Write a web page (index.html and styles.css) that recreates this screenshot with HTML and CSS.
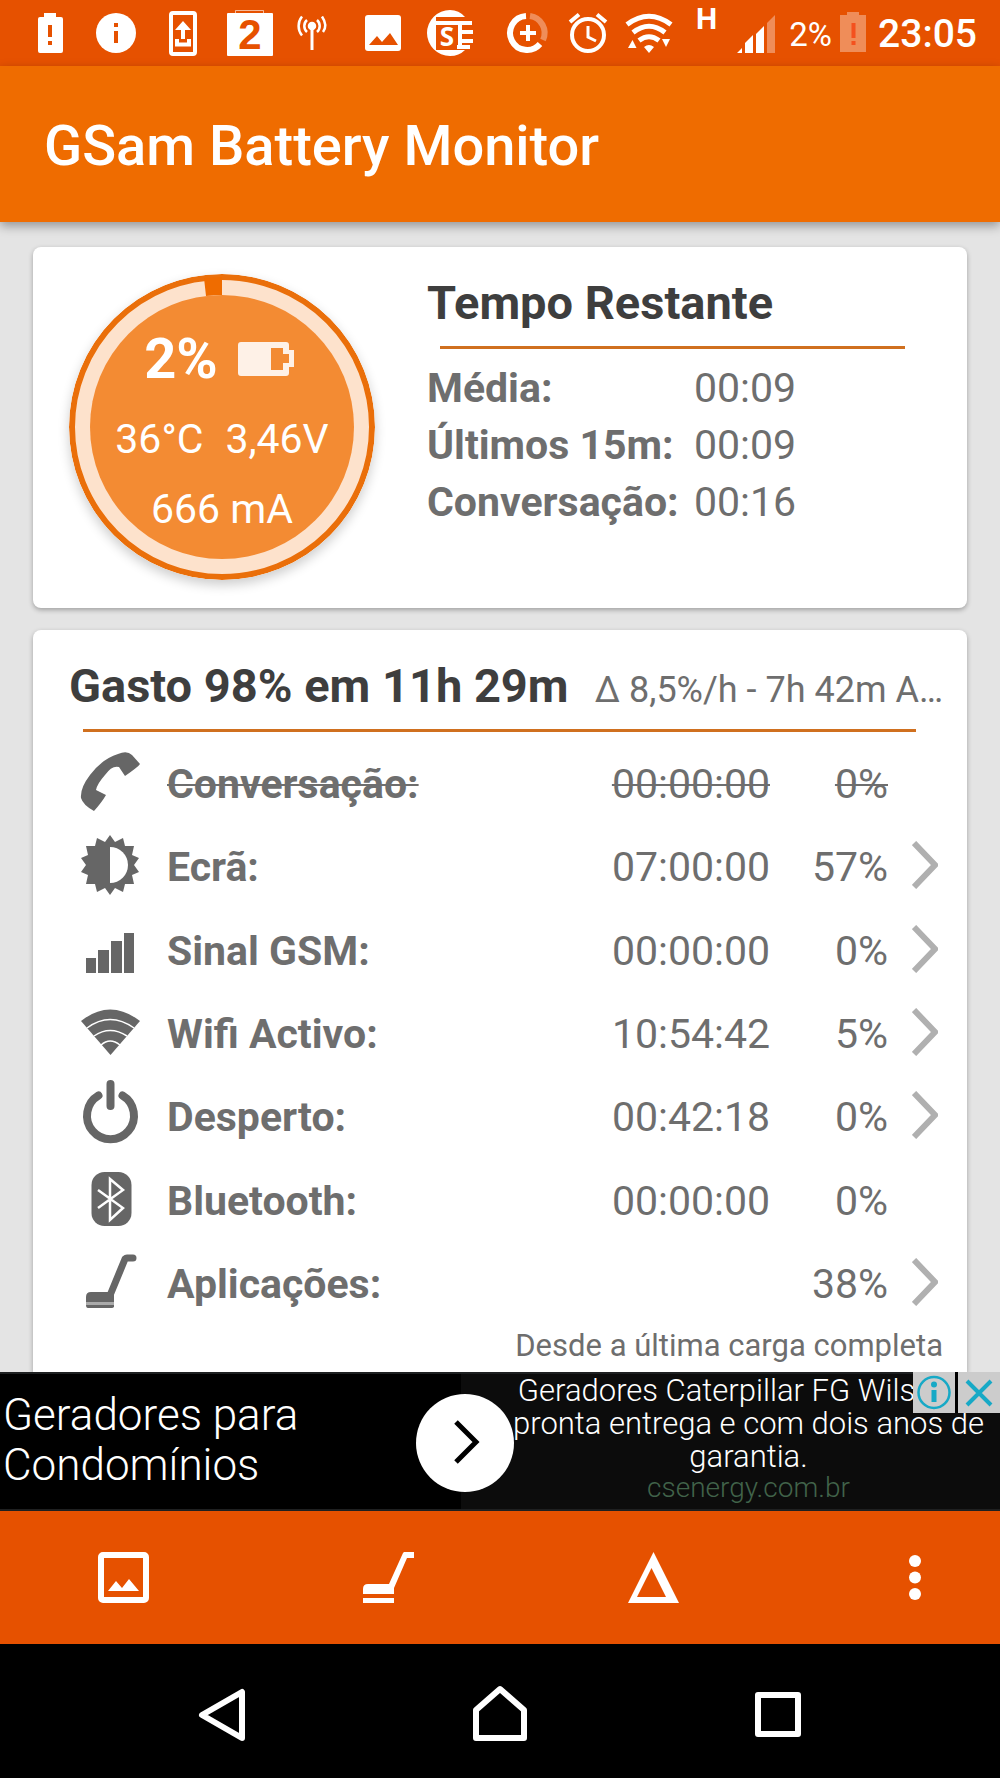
FILE: index.html
```html
<!DOCTYPE html>
<html lang="pt">
<head>
<meta charset="utf-8">
<meta name="viewport" content="width=device-width, initial-scale=1">
<title>GSam Battery Monitor</title>
<link rel="stylesheet" href="styles.css">
</head>
<body>
<div class="statusbar">
  <div class="notifications">
    <svg viewBox="0 0 67 66"><path fill="#fff" d="M29 13h12v4h5q2 0 2 2v32q0 2-2 2H25q-2 0-2-2V19q0-2 2-2h4z"/><path stroke="#e65100" stroke-width="4" d="M35 25v12M35 41v4"/></svg>
    <svg viewBox="0 0 67 66"><circle cx="34" cy="33" r="20" fill="#fff"/><path stroke="#e65100" stroke-width="4" d="M34 23v4M34 31v12"/></svg>
    <svg viewBox="0 0 67 66"><rect x="22" y="13" width="24" height="41" rx="2" fill="none" stroke="#fff" stroke-width="4"/><path fill="#fff" d="M34 21l8 9h-6v9h-4v-9h-6z"/><path fill="none" stroke="#fff" stroke-width="4" d="M28 39v5.500h12V39"/></svg>
    <svg viewBox="0 0 67 66"><path fill="none" stroke="#fff" stroke-opacity=".6" d="M19.500 14v-3.500h28V14"/><rect x="11" y="13" width="46" height="43" rx="1" fill="#fff"/><text class="calendar-day" x="34" y="49" text-anchor="middle">2</text></svg>
    <svg viewBox="0 0 67 66"><g fill="none" stroke="#fff" stroke-width="2.500"><circle cx="29" cy="26" r="3" fill="#fff"/><path stroke-width="3" d="M29 27v23"/><path d="M24 20a8 8 0 0 0 0 12M34 20a8 8 0 0 1 0 12M19 16.500a15 15 0 0 0 0 19M39 16.500q6 9 1 15.500"/></g></svg>
    <svg viewBox="0 0 67 66"><rect x="15" y="15" width="36" height="36" rx="3" fill="#fff"/><path fill="#e65100" d="M19 45l8-9 5 6 8-9 8 12z"/></svg>
    <svg viewBox="0 0 67 66"><path fill="#fff" d="M33 10a23 23 0 1 0 0 46q9 0 15-6H19V17h29q-6-7-15-7z"/><path stroke="#fff" stroke-width="4" d="M19 23h36M44 32h12M44 41h12M40 47h13"/><path fill="#fff" d="M41 22h4v27h-4z"/><text class="badge-letter" x="30" y="46" text-anchor="middle">S</text></svg>
  </div>
  <div class="system">
    <svg viewBox="0 0 60 66"><g fill="none" stroke-width="6"><path stroke="#fff" stroke-opacity=".35" d="M32 16a17 17 0 0 1 13 24"/><path stroke="#fff" d="M28 16a17 17 0 1 0 14 28"/><path stroke="#fff" stroke-width="4" d="M22 33h16M30 25v16"/></g></svg>
    <svg viewBox="0 0 60 66"><g fill="none" stroke="#fff" stroke-width="4"><circle cx="30" cy="35" r="16"/><path stroke-width="3" d="M30 26v11l8 4"/><path d="M12 22l9-7.500M39 14.500l9 7.500"/></g></svg>
    <svg viewBox="0 0 60 66"><g fill="none" stroke="#fff" stroke-width="5"><path d="M9 24.500Q31 8 53 24.500M15 32.500Q31 20 47 32.500M21 40.500Q31 33 41 40.500"/></g><path fill="#fff" d="M26 47q5-4 10 0l-5 6zM10 48l4.500-8 4 8zM44 39h8l-4 8z"/></svg>
    <svg class="network" viewBox="0 0 106 66"><text class="network-type" x="18" y="29">H</text><path fill="#fff" d="M59 53l5-5v5zM67 43l8-8v18h-8zM78 34l8-8v27h-8z"/><path fill="#fff" fill-opacity=".35" d="M89 23l8-8v38h-8z"/></svg>
    <span class="percent">2%</span>
    <svg class="charge" viewBox="0 0 26 66"><path fill="#fff" fill-opacity=".35" d="M7 12h12v3h7v37H0V15h7z"/><path stroke="#f4511e" stroke-width="4" d="M13.500 23v15M13.500 41v4"/></svg>
    <time class="clock">23:05</time>
  </div>
</div>

<header class="appbar"><h1>GSam Battery Monitor</h1></header>

<main class="content">
  <section class="card summary">
    <div class="gauge">
      <svg class="gauge-ring" viewBox="0 0 306 306"><circle cx="153" cy="153" r="150" fill="#fde2cc" stroke="#ea6f0a" stroke-width="6"/><circle cx="153" cy="153" r="132" fill="#f38b33"/><path fill="#ef6c00" d="M153 3v18q-8 0-16 1l-2-18z"/></svg>
      <div class="gauge-text">
        <div class="level"><strong>2%</strong>
          <svg viewBox="0 0 56 34"><path fill="#fef1e7" fill-rule="evenodd" d="M3 0h45q3 0 3 3v5h5v17h-5v6q0 3-3 3H3q-3 0-3-3V3q0-3 3-3zM33 6v22h12v-7h6v-9h-6V6z"/></svg>
        </div>
        <div class="reading"><span>36°C</span><span>3,46V</span></div>
        <div class="reading">666 mA</div>
      </div>
    </div>
    <div class="remaining">
      <h2>Tempo Restante</h2>
      <hr>
      <dl>
        <dt>Média:</dt><dd>00:09</dd>
        <dt>Últimos 15m:</dt><dd>00:09</dd>
        <dt>Conversação:</dt><dd>00:16</dd>
      </dl>
    </div>
  </section>

  <section class="card usage">
    <div class="usage-head"><h2>Gasto 98% em 11h 29m</h2><p>Δ 8,5%/h - 7h 42m A…</p></div>
    <hr>
    <table>
      <tr class="off">
        <td class="icon"><svg viewBox="0 0 64 64"><path d="M40 4Q49 0 54 5L62 14Q60 17 47 26L41 17Q34 15 27 25Q19 34 18 40L28 45Q24 52 16 61Q5 55 3 48Q2 38 12 25Q24 9 40 4Z"/></svg></td>
        <th scope="row">Conversação:</th><td class="time"><span>00:00:00</span></td><td class="share"><span>0%</span></td><td class="go"></td>
      </tr>
      <tr>
        <td class="icon"><svg viewBox="0 0 64 64"><g transform="translate(32 32)"><polygon points="0,-30 5,-23 13,-27 15,-19 24,-19 22,-10 29,-7 24,0 29,7 22,10 24,19 15,19 13,27 5,23 0,30 -5,23 -13,27 -15,19 -24,19 -22,10 -29,7 -24,0 -29,-7 -22,-10 -24,-19 -15,-19 -13,-27 -5,-23"/><path fill="#fff" d="M0-18A18 18 0 0 1 0 18Z"/></g></svg></td>
        <th scope="row">Ecrã:</th><td class="time">07:00:00</td><td class="share">57%</td>
        <td class="go"><button type="button" aria-label="Ecrã"><svg viewBox="0 0 26 48"><path d="M2 2l21 22L2 46"/></svg></button></td>
      </tr>
      <tr>
        <td class="icon"><svg viewBox="0 0 64 64"><path d="M8 41h10v15H8zM20 33h11v23H20zM33 24h11v32H33zM46 16h10v40H46z"/></svg></td>
        <th scope="row">Sinal GSM:</th><td class="time">00:00:00</td><td class="share">0%</td>
        <td class="go"><button type="button" aria-label="Sinal GSM"><svg viewBox="0 0 26 48"><path d="M2 2l21 22L2 46"/></svg></button></td>
      </tr>
      <tr>
        <td class="icon"><svg viewBox="0 0 64 64"><path d="M3 21Q32-2 62 21L32.500 55Z"/><path fill="none" stroke="#fff" stroke-width="1.500" d="M9 28Q32 11 56 28M16 36Q32 25 49 36M23 45Q32 37 42 45"/></svg></td>
        <th scope="row">Wifi Activo:</th><td class="time">10:54:42</td><td class="share">5%</td>
        <td class="go"><button type="button" aria-label="Wifi Activo"><svg viewBox="0 0 26 48"><path d="M2 2l21 22L2 46"/></svg></button></td>
      </tr>
      <tr>
        <td class="icon"><svg viewBox="0 0 64 64"><path fill="none" stroke="#666" stroke-width="8" stroke-linecap="round" d="M32.500 1v22M20.500 12.500a23.500 23.500 0 1 0 24 0"/></svg></td>
        <th scope="row">Desperto:</th><td class="time">00:42:18</td><td class="share">0%</td>
        <td class="go"><button type="button" aria-label="Desperto"><svg viewBox="0 0 26 48"><path d="M2 2l21 22L2 46"/></svg></button></td>
      </tr>
      <tr>
        <td class="icon"><svg viewBox="0 0 64 64"><rect x="13.500" y="5" width="40" height="54" rx="13"/><path fill="none" stroke="#fff" stroke-width="2.500" d="M20 23l25 18-13 12V12l13 11-25 18"/></svg></td>
        <th scope="row">Bluetooth:</th><td class="time">00:00:00</td><td class="share">0%</td><td class="go"></td>
      </tr>
      <tr>
        <td class="icon"><svg viewBox="0 0 64 64"><path fill="none" stroke="#666" stroke-width="7" stroke-linejoin="round" stroke-linecap="round" d="M33 43L47 9q1-1 2-1h6"/><path d="M13 42h23v10H8v-5q0-5 5-5zM8 55h28v2q-1 1-2 1H10q-2 0-2-3z"/><path fill="#aaa" d="M8 52h28v3H8z"/></svg></td>
        <th scope="row">Aplicações:</th><td class="time"></td><td class="share">38%</td>
        <td class="go"><button type="button" aria-label="Aplicações"><svg viewBox="0 0 26 48"><path d="M2 2l21 22L2 46"/></svg></button></td>
      </tr>
    </table>
    <p class="since">Desde a última carga completa</p>
  </section>
</main>

<aside class="ad">
  <p class="ad-title">Geradores para<br>Condomínios</p>
  <div class="ad-body">
    <p><span class="ad-first">Geradores Caterpillar FG Wils</span> pronta entrega e com dois anos de garantia.</p>
    <a href="#">csenergy.com.br</a>
  </div>
  <button type="button" class="ad-open" aria-label="Abrir"><svg viewBox="0 0 98 98"><path fill="none" stroke="#000" stroke-width="5" d="M40 28l20 20-20 20"/></svg></button>
  <div class="ad-controls">
    <button type="button" aria-label="Informação"><svg viewBox="0 0 42 41"><circle cx="21" cy="20.500" r="15.500" fill="none" stroke="#17a9c6" stroke-width="2.500"/><circle cx="21" cy="12.500" r="3" fill="#17a9c6"/><path fill="#17a9c6" d="M18.500 18h5v12h-5z"/></svg></button>
    <button type="button" aria-label="Fechar"><svg viewBox="0 0 42 41"><path stroke="#17a9c6" stroke-width="4" d="M9 9l24 24M33 9L9 33"/></svg></button>
  </div>
</aside>

<nav class="toolbar">
  <button type="button" aria-label="Gráfico"><svg viewBox="0 0 51 51"><rect x="3" y="3" width="45" height="45" rx="2" fill="none" stroke="#fff" stroke-width="6"/><path fill="#fff" d="M10 39l8-10 6 7 7-9 10 12z"/></svg></button>
  <button type="button" aria-label="Aplicações"><svg viewBox="0 0 51 51"><path fill="#fff" d="M0 42v-5q0-5 5-5h21L40 1l1-1h10v6h-7L31 36v6zM0 46h31v5H0z"/></svg></button>
  <button type="button" aria-label="Delta"><svg viewBox="0 0 51 51"><path fill="#fff" fill-rule="evenodd" d="M25.500 0L51 51H0zM23.500 16L9 45h29z"/></svg></button>
  <button type="button" class="more" aria-label="Mais opções"><svg viewBox="0 0 45 51"><g fill="#fff"><circle cx="22" cy="9" r="6"/><circle cx="22" cy="25.500" r="6"/><circle cx="22" cy="42" r="6"/></g></svg></button>
</nav>

<nav class="sysnav">
  <button type="button" aria-label="Voltar"><svg viewBox="0 0 60 60"><path d="M10 30L50 7v46z"/></svg></button>
  <button type="button" aria-label="Início"><svg viewBox="0 0 60 60"><path d="M6 53V25L30 4l24 21v28z"/></svg></button>
  <button type="button" aria-label="Recentes"><svg viewBox="0 0 60 60"><path d="M10 10h40v39H10z"/></svg></button>
</nav>
</body>
</html>
```
FILE: styles.css
```css
* { box-sizing: border-box; margin: 0; padding: 0; }

body {
  display: flex;
  flex-direction: column;
  height: 100vh;
  background: #e4e4e4;
  color: #6e6e6e;
  font-family: Roboto, "Liberation Sans", sans-serif;
  font-size: 41px;
}

svg { display: block; flex: none; }
button { border: 0; background: none; display: block; }

/* Status bar */
.statusbar {
  display: flex;
  justify-content: space-between;
  flex: none;
  height: 66px;
  padding: 0 23px 0 15px;
  background: #e65100;
  color: #fff;
}
.notifications, .system { display: flex; align-items: center; }
.notifications svg { width: 67px; height: 66px; }
.system svg { width: 60px; height: 66px; }
.system .network { width: 106px; }
.system .charge { width: 26px; }
.calendar-day { fill: #e65100; font: bold 42px "Liberation Sans", sans-serif; }
.badge-letter { fill: #fff; font: bold 26px "Open Sans", sans-serif; }
.network-type { fill: #fff; font-size: 30px; font-weight: 700; }
.percent { margin: 0 8px 0 5px; padding-top: 2px; font-size: 33px; }
.clock { margin-left: 12px; padding-top: 2px; font-size: 39px; font-weight: 500; }

/* App bar */
.appbar {
  display: flex;
  align-items: center;
  flex: none;
  position: relative;
  height: 156px;
  padding: 4px 44px 0;
  background: #ef6c00;
  box-shadow: 0 4px 10px rgba(0, 0, 0, .35);
}
h1 { color: #fff; font-size: 56px; font-weight: 500; line-height: 66px; }

/* Cards */
.content {
  display: flex;
  flex-direction: column;
  gap: 22px;
  flex: 1;
  min-height: 0;
  overflow: hidden;
  padding: 25px 33px 0;
}
.card {
  border-radius: 8px;
  background: #fff;
  box-shadow: 0 2px 5px rgba(0, 0, 0, .3);
}
h2 { color: #3e3e3e; font-size: 47px; font-weight: 700; line-height: 56px; }
hr { height: 3px; border: 0; background: #d0701f; }

.summary { display: flex; gap: 52px; flex: none; padding: 27px 36px 28px; }
.gauge { display: grid; flex: none; width: 306px; height: 306px; }
.gauge > * { grid-area: 1 / 1; }
.gauge-ring { width: 306px; border-radius: 50%; box-shadow: 0 5px 12px rgba(0, 0, 0, .2); }
.gauge-text { position: relative; padding-top: 48px; color: #fff; }
.level { display: flex; align-items: center; justify-content: center; gap: 20px; height: 82px; padding: 0 6px 8px 0; }
.level strong { font-size: 56px; line-height: 74px; }
.level svg { width: 56px; height: 34px; }
.reading { display: flex; justify-content: center; gap: 22px; line-height: 70px; }

.remaining { flex: 1; }
.remaining h2 { margin-top: 1px; }
.remaining hr { margin: 15px 26px 11px 13px; }
dl { display: grid; grid-template-columns: 267px auto; line-height: 57px; }
dt, th { font-weight: 700; }

.usage { flex: 1; min-height: 0; padding: 28px 24px 0 36px; border-radius: 8px 8px 0 0; }
.usage-head { display: flex; align-items: baseline; justify-content: space-between; }
.usage-head p { font-size: 36px; white-space: nowrap; }
.usage hr { margin: 15px 27px 8px 14px; }
table { width: 100%; height: 584px; border-collapse: collapse; table-layout: fixed; }
td, th { vertical-align: middle; white-space: nowrap; line-height: 48px; }
th { padding: 4px 0 0 16px; text-align: left; }
.icon { width: 82px; }
.icon svg { width: 64px; height: 64px; margin-left: 9px; fill: #666; overflow: visible; }
.time, .share { padding-top: 4px; text-align: right; }
.time { width: 170px; }
.share { width: 118px; }
.off th, .off span { text-decoration: line-through; text-decoration-thickness: 2px; }
.go { width: 55px; }
.go button { margin-left: 24px; }
.go svg { width: 26px; height: 48px; fill: none; stroke: #b0b0b0; stroke-width: 6; }
.since { font-size: 31px; line-height: 44px; text-align: right; }

/* Ad banner */
.ad {
  display: grid;
  grid-template-columns: 461px 1fr;
  position: relative;
  flex: none;
  height: 139px;
  border: solid #1e2021;
  border-width: 2px 0;
  background: #000;
  color: #fff;
  font-weight: 300;
}
.ad-title { padding: 16px 3px 0; font-size: 44px; line-height: 50px; }
.ad-body { padding: 0 16px 0 52px; background: #0c0c0c; font-size: 31px; line-height: 33px; text-align: center; }
.ad-body a { display: block; color: #41634a; font-size: 28px; line-height: 30px; text-decoration: none; }
.ad-first { display: block; padding-right: 64px; white-space: nowrap; }
.ad-open {
  position: absolute;
  top: 20px;
  left: 416px;
  width: 98px;
  height: 98px;
  border-radius: 50%;
  background: #fff;
}
.ad-controls { position: absolute; top: -2px; right: 0; display: flex; gap: 3px; background: #000; }
.ad-controls button { width: 42px; height: 41px; background: #ccc; }

/* Toolbars */
.toolbar {
  display: flex;
  align-items: center;
  justify-content: space-between;
  flex: none;
  height: 133px;
  padding: 0 62px 0 98px;
  background: #e65100;
}
.toolbar button { width: 51px; height: 51px; }
.toolbar .more { width: 45px; }
.sysnav {
  display: flex;
  align-items: center;
  justify-content: space-around;
  flex: none;
  height: 134px;
  padding: 8px 83px 0;
  background: #000;
}
.sysnav svg { width: 60px; height: 60px; fill: none; stroke: #fff; stroke-width: 6; stroke-linejoin: round; }
```
